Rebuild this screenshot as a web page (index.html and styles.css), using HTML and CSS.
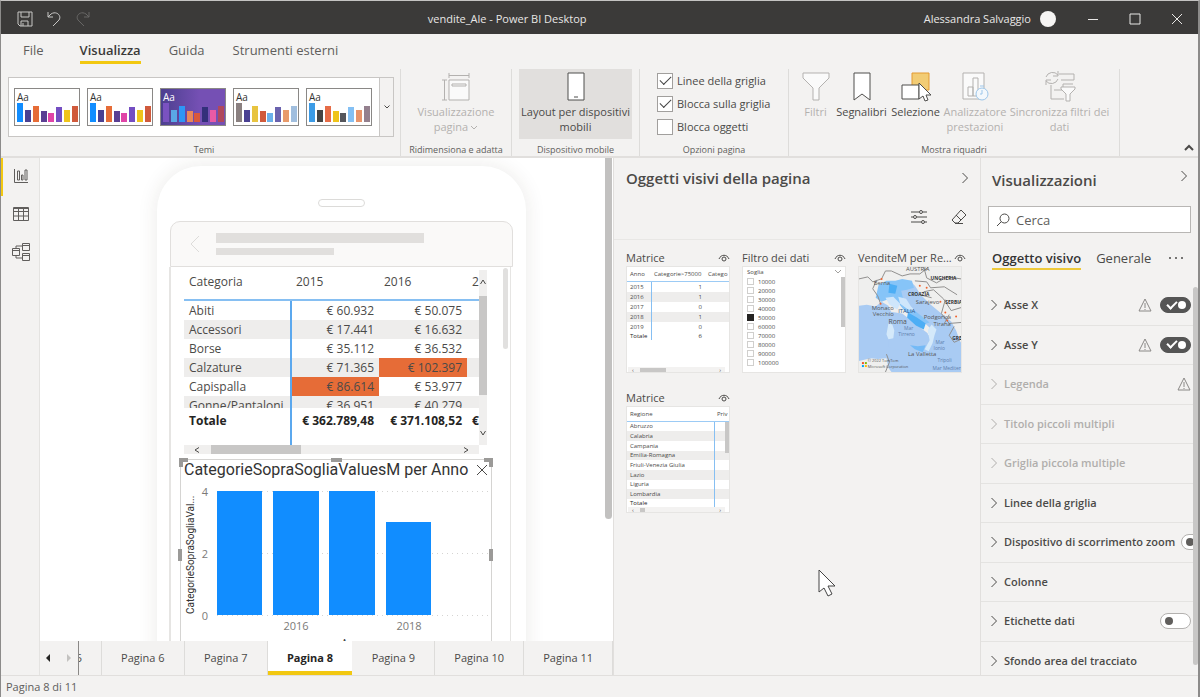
FILE: index.html
```html
<!DOCTYPE html>
<html lang="it">

<head>
    <meta charset="UTF-8">
    <meta name="viewport" content="width=device-width, initial-scale=1.0">
    <link rel="stylesheet" href="styles.css">
    <title>vendite_Ale - Power BI Desktop</title>
</head>

<body>
    <header class="titlebar">
        <div class="quick">
            <button aria-label="Salva"><svg width="16" height="16" viewBox="0 0 16 16"><path d="M1 1h14v14H3l-2-2zM4 1v5h8V1M4 15v-5h7v5M6 12v3" /></svg></button>
            <button aria-label="Annulla"><svg width="16" height="16" viewBox="0 0 16 16"><path d="M2 1v5h5M2 6l3-3c6-4 12 3 7 7l-5 5" /></svg></button>
            <button aria-label="Ripeti" disabled><svg width="16" height="16" viewBox="0 0 16 16"><path d="M14 1v5H9M14 6l-3-3C5-1-1 6 4 10l5 5" /></svg></button>
        </div>
        <h1>vendite_Ale - Power BI Desktop</h1>
        <div class="account">
            <span>Alessandra Salvaggio</span>
            <span class="avatar"></span>
            <button aria-label="Riduci a icona"><svg width="12" height="12" viewBox="0 0 12 12"><path d="M1 6.500h10" /></svg></button>
            <button aria-label="Ingrandisci"><svg width="12" height="12" viewBox="0 0 12 12"><path d="M1 1h10v10H1z" /></svg></button>
            <button aria-label="Chiudi"><svg width="12" height="12" viewBox="0 0 12 12"><path d="M1 1l10 10M11 1L1 11" /></svg></button>
        </div>
    </header>

    <nav class="menu">
        <a href="#">File</a>
        <a href="#" class="active">Visualizza</a>
        <a href="#">Guida</a>
        <a href="#">Strumenti esterni</a>
    </nav>

    <section class="ribbon">
        <div class="group group-themes">
            <div class="gallery">
                <button class="theme" aria-label="Tema 1"><span>Aa</span>
                    <svg width="64" height="36" viewBox="0 0 64 36"><path fill="#118dff" d="M2 14h6v19H2z" /><path fill="#4a4092" d="M10 21h6v12h-6z" /><path fill="#e66c37" d="M18 17h6v16h-6z" /><path fill="#5b3f93" d="M26 22h6v11h-6z" /><path fill="#e044a7" d="M33 24h6v9h-6z" /><path fill="#744ec2" d="M41 18h6v15h-6z" /><path fill="#efc41b" d="M49 21h6v12h-6z" /><path fill="#d05a3c" d="M57 17h6v16h-6z" /></svg>
                </button>
                <button class="theme" aria-label="Tema 2"><span>Aa</span>
                    <svg width="64" height="36" viewBox="0 0 64 36"><path fill="#118dff" d="M2 14h6v19H2z" /><path fill="#4a4092" d="M10 21h6v12h-6z" /><path fill="#e66c37" d="M18 17h6v16h-6z" /><path fill="#5b3f93" d="M26 22h6v11h-6z" /><path fill="#e044a7" d="M33 24h6v9h-6z" /><path fill="#744ec2" d="M41 18h6v15h-6z" /><path fill="#efc41b" d="M49 21h6v12h-6z" /><path fill="#d05a3c" d="M57 17h6v16h-6z" /></svg>
                </button>
                <button class="theme theme-dark" aria-label="Tema 3"><span>Aa</span>
                    <svg width="64" height="36" viewBox="0 0 64 36"><path fill="#7a52c0" d="M2 14h6v19H2z" /><path fill="#5aa9e6" d="M10 21h6v12h-6z" /><path fill="#2e96f5" d="M18 17h6v16h-6z" /><path fill="#e8875a" d="M26 22h6v11h-6z" /><path fill="#d9583c" d="M33 24h6v9h-6z" /><path fill="#33307a" d="M41 18h6v15h-6z" /><path fill="#e85aa5" d="M49 21h6v12h-6z" /><path fill="#b0485c" d="M57 17h6v16h-6z" /></svg>
                </button>
                <button class="theme" aria-label="Tema 4"><span>Aa</span>
                    <svg width="64" height="36" viewBox="0 0 64 36"><path fill="#8a8080" d="M2 14h6v19H2z" /><path fill="#4a4092" d="M10 21h6v12h-6z" /><path fill="#e8c440" d="M18 17h6v16h-6z" /><path fill="#d05a3c" d="M26 22h6v11h-6z" /><path fill="#6ab0ea" d="M33 24h6v9h-6z" /><path fill="#6a62ae" d="M41 18h6v15h-6z" /><path fill="#e89a6a" d="M49 21h6v12h-6z" /><path fill="#a0bede" d="M57 17h6v16h-6z" /></svg>
                </button>
                <button class="theme" aria-label="Tema 5"><span>Aa</span>
                    <svg width="64" height="36" viewBox="0 0 64 36"><path fill="#3c9be6" d="M2 14h6v19H2z" /><path fill="#444" d="M10 21h6v12h-6z" /><path fill="#e66c47" d="M18 17h6v16h-6z" /><path fill="#efc41b" d="M26 22h6v11h-6z" /><path fill="#55565c" d="M33 24h6v9h-6z" /><path fill="#84c0f4" d="M41 18h6v15h-6z" /><path fill="#e8946a" d="M49 21h6v12h-6z" /><path fill="#94808e" d="M57 17h6v16h-6z" /></svg>
                </button>
                <button class="gallery-more" aria-label="Altri temi"><svg width="8" height="6" viewBox="0 0 8 6"><path d="M1.500 1.500L4 4l2.500-2.500" /></svg></button>
            </div>
            <p>Temi</p>
        </div>
        <div class="group group-view">
            <div class="tools">
                <button class="tool" disabled>
                    <svg width="32" height="32" viewBox="0 0 32 32"><path d="M9 2v5M29 2v5M9 4.500h20M2 9h5M2 29h5M4.500 9v20" /><path fill="#fafafa" d="M9 9h20v20H9z" /><path d="M12 13h14v2H12z" /></svg>
                    <span>Visualizzazione pagina<svg class="caret" width="8" height="6" viewBox="0 0 8 6"><path d="M1 1l3 3 3-3" /></svg></span>
                </button>
            </div>
            <p>Ridimensiona e adatta</p>
        </div>
        <div class="group group-mobile">
            <div class="tools">
                <button class="tool selected">
                    <svg width="32" height="32" viewBox="0 0 32 32"><path fill="#fff" d="M8 2h16v27H8z" /><path d="M14 26h4" /></svg>
                    <span>Layout per dispositivi mobili</span>
                </button>
            </div>
            <p>Dispositivo mobile</p>
        </div>
        <div class="group group-options">
            <div class="checks">
                <label><input type="checkbox" checked>Linee della griglia</label>
                <label><input type="checkbox" checked>Blocca sulla griglia</label>
                <label><input type="checkbox">Blocca oggetti</label>
            </div>
            <p>Opzioni pagina</p>
        </div>
        <div class="group group-panes">
            <div class="tools">
                <button class="tool filters" disabled>
                    <svg width="32" height="32" viewBox="0 0 32 32"><path fill="#fafafa" d="M3 2h26v5L19 17v12h-6V17L3 7z" /></svg>
                    <span>Filtri</span>
                </button>
                <button class="tool bookmarks">
                    <svg width="32" height="32" viewBox="0 0 32 32"><path fill="#fff" d="M8 2h16v27l-8-6-8 6z" /></svg>
                    <span>Segnalibri</span>
                </button>
                <button class="tool selection">
                    <svg width="32" height="32" viewBox="0 0 32 32"><path fill="#f2cc74" stroke="#e39a30" d="M12 2h17v17H12z" /><path fill="#fff" d="M2 14h17v14H2z" /><path fill="#fff" d="M19 12v16l4-3 2 5 3-1-2-5h5z" /></svg>
                    <span>Selezione</span>
                </button>
                <button class="tool analyzer" disabled>
                    <svg width="32" height="32" viewBox="0 0 32 32"><path fill="#fafafa" d="M4 2h21v26H4z" /><path d="M9 16h5v9H9zM14 7h5v18h-5z" /><g stroke="#9cc6ea"><circle cx="23" cy="23" r="6" fill="#f3f8fc" /><path d="M23 19v4h-2M21 15h4" /></g></svg>
                    <span>Analizzatore prestazioni</span>
                </button>
                <button class="tool sync" disabled>
                    <svg width="32" height="32" viewBox="0 0 32 32"><path d="M15 3h15v6H17M7 14v14h13M10 19h9v-6h10" /><path fill="#fafafa" d="M17 16h14v2l-5 5v7h-4v-7l-5-5z" /><path d="M2 6a7 7 0 0 1 12-2M14 0v5h-5M14 8a7 7 0 0 1-12 2M2 14V9h5" /></svg>
                    <span>Sincronizza filtri dei dati</span>
                </button>
            </div>
            <p>Mostra riquadri</p>
        </div>
        <button class="collapse" aria-label="Comprimi barra"><svg width="10" height="7" viewBox="0 0 10 7"><path d="M1 6l4-4 4 4" /></svg></button>
    </section>

    <main class="workspace">
        <nav class="views">
            <a href="#" class="active" aria-label="Report"><svg width="16" height="16" viewBox="0 0 16 16"><path d="M1.500 1v13.500H15M4.500 3h2v9h-2zM8.500 7h1.500v5h-1.500zM12 2h2v10h-2z" /></svg></a>
            <a href="#" aria-label="Dati"><svg width="16" height="16" viewBox="0 0 16 16"><path d="M.5 1.500h15v13H.5zM.5 5.500h15M.5 10h15M5.500 1.500v13M10.500 1.500v13" /><path d="M.5 2.500h15" /></svg></a>
            <a href="#" aria-label="Modello"><svg width="20" height="20" viewBox="0 0 20 20"><path d="M1.500 6.500h7v7h-7zM1.500 8.500h7M11.500 1.500h7v7h-7zM11.500 3.500h7M11.500 11.500h7v7h-7zM11.500 13.500h7M5 6.500V4h6.500M5 13.500V16h6.500" /></svg></a>
        </nav>

        <section class="editor">
            <div class="canvas">
                <div class="phone">
                    <div class="speaker"></div>
                    <div class="phone-head">
                        <svg width="10" height="18" viewBox="0 0 10 18"><path d="M9 1L1 9l8 8" /></svg>
                        <div class="placeholder"><i></i><i></i></div>
                    </div>
                    <div class="screen">
                        <div class="matrix">
                            <div class="matrix-view">
                                <table>
                                    <thead>
                                        <tr><th>Categoria</th><th>2015</th><th>2016</th><th>2</th></tr>
                                    </thead>
                                    <tbody>
                                        <tr><td>Abiti</td><td>€ 60.932</td><td>€ 50.075</td><td></td></tr>
                                        <tr><td>Accessori</td><td>€ 17.441</td><td>€ 16.632</td><td></td></tr>
                                        <tr><td>Borse</td><td>€ 35.112</td><td>€ 36.532</td><td></td></tr>
                                        <tr><td>Calzature</td><td>€ 71.365</td><td class="over">€ 102.397</td><td></td></tr>
                                        <tr><td>Capispalla</td><td class="over">€ 86.614</td><td>€ 53.977</td><td></td></tr>
                                        <tr class="cut"><td><div>Gonne/Pantaloni</div></td><td><div>€ 36.951</div></td><td><div>€ 40.279</div></td><td></td></tr>
                                    </tbody>
                                    <tfoot>
                                        <tr><td>Totale</td><td>€ 362.789,48</td><td>€ 371.108,52</td><td>€</td></tr>
                                    </tfoot>
                                </table>
                                <div class="vscroll">
                                    <svg width="8" height="6" viewBox="0 0 8 6"><path d="M1.500 5L4 1l2.500 4" /></svg>
                                    <i></i>
                                    <svg width="8" height="6" viewBox="0 0 8 6"><path d="M1.500 1L4 5l2.500-4" /></svg>
                                </div>
                            </div>
                            <div class="hscroll">
                                <svg width="6" height="8" viewBox="0 0 6 8"><path d="M5 1.500L1 4l4 2.500" /></svg>
                                <i></i>
                                <svg width="6" height="8" viewBox="0 0 6 8"><path d="M1 1.500L5 4 1 6.500" /></svg>
                            </div>
                        </div>
                        <div class="chart">
                            <div class="chart-title">
                                <h2>CategorieSopraSogliaValuesM per Anno</h2>
                                <button aria-label="Rimuovi"><svg width="12" height="12" viewBox="0 0 12 12"><path d="M1 1l10 10M11 1L1 11" /></svg></button>
                            </div>
                            <svg class="plot" width="310" height="170" viewBox="0 0 310 170">
                                <path class="gridline" d="M36 11.500h272M36 73.500h272M36 135.500h272" />
                                <path class="bar" d="M36 11h45v124H36zM92 11h46v124H92zM148 11h46v124h-46zM205 42h45v93h-45z" />
                                <text class="axis" x="27" y="16" text-anchor="end">4</text>
                                <text class="axis" x="27" y="78" text-anchor="end">2</text>
                                <text class="axis" x="27" y="140" text-anchor="end">0</text>
                                <text class="axis" x="115" y="150" text-anchor="middle">2016</text>
                                <text class="axis" x="228" y="150" text-anchor="middle">2018</text>
                                <text class="axis-name" x="172" y="167" text-anchor="middle">Anno</text>
                                <text class="axis-name" transform="translate(13 134) rotate(-90)">CategorieSopraSogliaVal...</text>
                            </svg>
                            <i class="handle top-left"></i>
                            <i class="handle top"></i>
                            <i class="handle top-right"></i>
                            <i class="handle left"></i>
                            <i class="handle right"></i>
                        </div>
                        <div class="screen-scroll"></div>
                    </div>
                </div>
                <div class="canvas-scroll"></div>
            </div>
            <nav class="pages">
                <div class="pager">
                    <button aria-label="Pagina precedente"><svg width="6" height="8" viewBox="0 0 6 8"><path d="M5 0v8L1 4z" /></svg></button>
                    <button aria-label="Pagina successiva" disabled><svg width="6" height="8" viewBox="0 0 6 8"><path d="M1 0v8l4-4z" /></svg></button>
                </div>
                <a href="#" class="partial"><span>5</span></a>
                <a href="#">Pagina 6</a>
                <a href="#">Pagina 7</a>
                <a href="#" class="active">Pagina 8</a>
                <a href="#">Pagina 9</a>
                <a href="#" class="wide">Pagina 10</a>
                <a href="#" class="wide">Pagina 11</a>
            </nav>
        </section>

        <aside class="visuals">
            <div class="visuals-head">
                <h2>Oggetti visivi della pagina</h2>
                <button aria-label="Comprimi"><svg width="8" height="12" viewBox="0 0 8 12"><path d="M1.500 1l5 5-5 5" /></svg></button>
            </div>
            <div class="visuals-tools">
                <button aria-label="Opzioni"><svg width="16" height="14" viewBox="0 0 16 14"><path d="M0 2h8M12 2h4M0 7h2M6 7h10M0 12h10M14 12h2" /><circle cx="10" cy="2" r="1.500" /><circle cx="4" cy="7" r="1.500" /><circle cx="12" cy="12" r="1.500" /></svg></button>
                <button aria-label="Cancella"><svg width="16" height="16" viewBox="0 0 16 16"><path d="M10 1l5 5-8 8H4l-3-3zM5 6l5 5M4 14.500h8" /></svg></button>
            </div>
            <div class="cards">
                <article>
                    <h3><span>Matrice</span><svg width="12" height="8" viewBox="0 0 12 8"><path d="M1 5c2-5 8-5 10 0" /><circle cx="6" cy="5" r="2" /></svg></h3>
                    <div class="card mini-years">
                        <table>
                            <thead><tr><th>Anno</th><th>Categorie&gt;75000</th><th>Catego</th></tr></thead>
                            <tbody>
                                <tr><td>2015</td><td>1</td><td></td></tr>
                                <tr><td>2016</td><td>1</td><td></td></tr>
                                <tr><td>2017</td><td>0</td><td></td></tr>
                                <tr><td>2018</td><td>1</td><td></td></tr>
                                <tr><td>2019</td><td>0</td><td></td></tr>
                            </tbody>
                            <tfoot><tr><td>Totale</td><td>6</td><td></td></tr></tfoot>
                        </table>
                        <div class="mini-scroll"><span>‹</span><i></i><span>›</span></div>
                    </div>
                </article>
                <article>
                    <h3><span>Filtro dei dati</span><svg width="12" height="8" viewBox="0 0 12 8"><path d="M1 5c2-5 8-5 10 0" /><circle cx="6" cy="5" r="2" /></svg></h3>
                    <div class="card slicer">
                        <div class="slicer-head">Soglia<svg width="8" height="6" viewBox="0 0 8 6"><path d="M1 1l3 3 3-3" /></svg></div>
                        <label><input type="checkbox">10000</label>
                        <label><input type="checkbox">20000</label>
                        <label><input type="checkbox">30000</label>
                        <label><input type="checkbox">40000</label>
                        <label><input type="checkbox" checked>50000</label>
                        <label><input type="checkbox">60000</label>
                        <label><input type="checkbox">70000</label>
                        <label><input type="checkbox">80000</label>
                        <label><input type="checkbox">90000</label>
                        <label><input type="checkbox">100000</label>
                        <i class="slicer-scroll"></i>
                    </div>
                </article>
                <article>
                    <h3><span>VenditeM per Re...</span><svg width="12" height="8" viewBox="0 0 12 8"><path d="M1 5c2-5 8-5 10 0" /><circle cx="6" cy="5" r="2" /></svg></h3>
                    <div class="card">
                        <svg class="map" viewBox="0 0 104 106" preserveAspectRatio="none">
                            <path fill="#efefee" d="M0 0h104v106H0z" />
                            <path fill="#a9cbf3" d="M0 39l8-1 9 2 6-5 7 4 4 9 8 9 10 6 9 7 2 7-3 8h6l4-8-1-8 7-1-3-6-10-9-10-8-7-9-7-9-2-9 6-4 9 0 5 5 6 9 9 9 12 10 10 8 5 9 4 11 4 5v31H37l-7-9-2-10-9 1-7-1-12 3z" />
                            <path fill="#a9cbf3" d="M30 45l14 2 26 20 4 16-14 6-30-8z" />
                            <path fill="#d4e9fa" d="M30 57l4 1 2 6-1 8-5 1-2-5zM74 58l5 5-2 6-2 8-4 8-4-2 5-9-2-10z" />
                            <path fill="#86c4f8" d="M20 18l8-4 9 0 7-2 10 2 2 7-7 2-6 1 2 8 8 9 10 8 9 7-7 2-9-7-9-6-7-9-9-4-8 3-6-4z" />
                            <path fill="#4daef5" d="M31 17l8 2-2 8-7-1zM50 46l9 5 9 6-2 6-8-4-9-8z" />
                            <path fill="#74baf6" d="M52 79l8 1 8-1-3 7-8-3z" />
                            <path fill="#cfe6fb" d="M40 30l8 2 5 8 4 4-7-1-8-6zM27 31l8-1 7 7-3 6-8-5z" />
                            <path class="border-line" d="M0 12l9-2 5 5 9-3 4-8 6 0 11 5 8-2 10 0 9-7M66 0l3 11 10 5 11-6 14 2M57 14l12 1 4 6 14-1 13 8M66 25l10-2 10 9 8 12 10-3M74 31l-12-3M88 33l-4 14 8 10 12-1M92 48l-5 9M97 60l-5 9 5 7 7-3M18 13l-4 9 5 7 3 8M28 88l3 8-4 10" />
                            <g fill="#f0642f"><circle cx="23" cy="12" r="1" /><circle cx="22" cy="37" r="1" /><circle cx="62" cy="19" r="1" /><circle cx="69" cy="21" r="1" /><circle cx="83" cy="35" r="1" /><circle cx="88" cy="46" r="1" /><circle cx="99" cy="50" r="1" /><circle cx="90" cy="54" r="1" /></g>
                            <g class="country"><text x="73" y="13">UNGHERIA</text><text x="50" y="29">CROAZIA</text><text x="88" y="37">SERBIA</text><text x="95" y="74">GRE</text></g>
                            <text x="48" y="4">AUSTRIA</text>
                            <text x="15" y="18">Berna</text>
                            <text x="58" y="37">Sarajevo</text>
                            <text x="13" y="43">Monaco</text>
                            <text x="14" y="49">Vecchio</text>
                            <text class="italy" x="40" y="46">ITALIA</text>
                            <text x="66" y="53">Podgorica</text>
                            <text x="76" y="60">Tirana</text>
                            <text class="city" x="30" y="58">Roma</text>
                            <g class="sea"><text x="46" y="64">Mar</text><text x="40" y="70">Tirreno</text><text x="78" y="78">Mar</text><text x="76" y="84">Ionio</text><text x="80" y="96">Tripoli</text><text x="75" y="104">Mar Mediterr.</text></g>
                            <text x="50" y="90">La Valletta</text>
                            <text class="copy" x="9" y="96">© 2022 TomTom</text><text class="copy" x="9" y="102">Microsoft Corporation</text>
                            <path fill="#f25022" d="M3 96h2v2H3z" /><path fill="#7fba00" d="M6 96h2v2H6z" /><path fill="#00a4ef" d="M3 99h2v2H3z" /><path fill="#ffb900" d="M6 99h2v2H6z" />
                        </svg>
                    </div>
                </article>
                <article>
                    <h3><span>Matrice</span><svg width="12" height="8" viewBox="0 0 12 8"><path d="M1 5c2-5 8-5 10 0" /><circle cx="6" cy="5" r="2" /></svg></h3>
                    <div class="card mini-regions">
                        <table>
                            <thead><tr><th>Regione</th><th>Priv</th></tr></thead>
                            <tbody>
                                <tr><td>Abruzzo</td><td></td></tr>
                                <tr><td>Calabria</td><td></td></tr>
                                <tr><td>Campania</td><td></td></tr>
                                <tr><td>Emilia-Romagna</td><td></td></tr>
                                <tr><td>Friuli-Venezia Giulia</td><td></td></tr>
                                <tr><td>Lazio</td><td></td></tr>
                                <tr><td>Liguria</td><td></td></tr>
                                <tr><td>Lombardia</td><td></td></tr>
                            </tbody>
                            <tfoot><tr><td>Totale</td><td></td></tr></tfoot>
                        </table>
                        <div class="mini-scroll short"><span>‹</span><i></i><span>›</span></div>
                        <i class="region-scroll"></i>
                    </div>
                </article>
            </div>
        </aside>

        <aside class="format">
            <div class="format-head">
                <h2>Visualizzazioni</h2>
                <button aria-label="Comprimi"><svg width="8" height="12" viewBox="0 0 8 12"><path d="M1.500 1l5 5-5 5" /></svg></button>
            </div>
            <label class="search">
                <svg width="14" height="14" viewBox="0 0 14 14"><circle cx="8.500" cy="5.500" r="4.500" /><path d="M5.300 8.700L1 13" /></svg>
                <input type="text" placeholder="Cerca" aria-label="Cerca">
            </label>
            <nav class="format-tabs">
                <a href="#" class="active">Oggetto visivo</a>
                <a href="#">Generale</a>
                <button aria-label="Altro"><svg width="16" height="4" viewBox="0 0 16 4"><circle cx="2" cy="2" r="1" /><circle cx="8" cy="2" r="1" /><circle cx="14" cy="2" r="1" /></svg></button>
            </nav>
            <div class="options">
                <div class="options-list">
                    <div class="option"><svg class="chevron" width="8" height="12" viewBox="0 0 8 12"><path d="M1.500 1l5 5-5 5" /></svg><label for="asse-x">Asse X</label><svg class="warn" width="14" height="14" viewBox="0 0 14 14"><path d="M7 1l6 12H1zM7 5v5M7 11v1" /></svg><input type="checkbox" class="toggle" id="asse-x" checked></div>
                    <div class="option"><svg class="chevron" width="8" height="12" viewBox="0 0 8 12"><path d="M1.500 1l5 5-5 5" /></svg><label for="asse-y">Asse Y</label><svg class="warn" width="14" height="14" viewBox="0 0 14 14"><path d="M7 1l6 12H1zM7 5v5M7 11v1" /></svg><input type="checkbox" class="toggle" id="asse-y" checked></div>
                    <div class="option off"><svg class="chevron" width="8" height="12" viewBox="0 0 8 12"><path d="M1.500 1l5 5-5 5" /></svg><span>Legenda</span><svg class="warn" width="14" height="14" viewBox="0 0 14 14"><path d="M7 1l6 12H1zM7 5v5M7 11v1" /></svg></div>
                    <div class="option off"><svg class="chevron" width="8" height="12" viewBox="0 0 8 12"><path d="M1.500 1l5 5-5 5" /></svg><span>Titolo piccoli multipli</span></div>
                    <div class="option off"><svg class="chevron" width="8" height="12" viewBox="0 0 8 12"><path d="M1.500 1l5 5-5 5" /></svg><span>Griglia piccola multiple</span></div>
                    <div class="option"><svg class="chevron" width="8" height="12" viewBox="0 0 8 12"><path d="M1.500 1l5 5-5 5" /></svg><span>Linee della griglia</span></div>
                    <div class="option"><svg class="chevron" width="8" height="12" viewBox="0 0 8 12"><path d="M1.500 1l5 5-5 5" /></svg><label for="zoom">Dispositivo di scorrimento zoom</label><input type="checkbox" class="toggle" id="zoom"></div>
                    <div class="option"><svg class="chevron" width="8" height="12" viewBox="0 0 8 12"><path d="M1.500 1l5 5-5 5" /></svg><span>Colonne</span></div>
                    <div class="option"><svg class="chevron" width="8" height="12" viewBox="0 0 8 12"><path d="M1.500 1l5 5-5 5" /></svg><label for="etichette">Etichette dati</label><input type="checkbox" class="toggle" id="etichette"></div>
                    <div class="option"><svg class="chevron" width="8" height="12" viewBox="0 0 8 12"><path d="M1.500 1l5 5-5 5" /></svg><span>Sfondo area del tracciato</span></div>
                </div>
                <div class="options-scroll"></div>
            </div>
        </aside>
    </main>

    <footer class="status">Pagina 8 di 11</footer>

    <svg class="pointer" width="18" height="28" viewBox="0 0 18 28"><path d="M1 1v22l5-4 4 8 4-2-4-8h7z" /></svg>
</body>

</html>
```

FILE: styles.css
```css
* {
    box-sizing: border-box;
}

body {
    font-family: "Open Sans", "Noto Sans", sans-serif;
    font-size: 11px;
    line-height: 16px;
    color: #4b4a48;
    background-color: #f3f2f1;
    margin: 0;
    height: 100vh;
    display: flex;
    flex-direction: column;
    overflow: hidden;
    border: 1px solid #8c8b8a;
    border-top-color: #c4c3c2;
    border-right-width: 2px;
    border-bottom: none;
}

h1,
h2,
h3,
p {
    margin: 0;
    font-weight: 400;
}

a {
    color: inherit;
    text-decoration: none;
}

button {
    font: inherit;
    color: inherit;
    background: none;
    border: none;
    padding: 0;
    display: flex;
    align-items: center;
    justify-content: center;
}

svg {
    display: block;
    flex-shrink: 0;
    fill: none;
    stroke: currentColor;
}

table {
    border-collapse: collapse;
    table-layout: fixed;
}

th,
td {
    padding: 0;
    font-weight: 400;
    text-align: left;
    white-space: nowrap;
}

/* barra del titolo */
.titlebar {
    display: grid;
    grid-template-columns: 15fr auto 22fr;
    align-items: center;
    flex-shrink: 0;
    height: 33px;
    padding: 3px 9px 0 16px;
    color: #e8e7e6;
    background-color: #3b3a39;
    line-height: 28px;
}

.titlebar h1 {
    font-size: 11px;
}

.quick,
.account {
    display: flex;
    align-items: center;
}

.quick {
    gap: 13px;
}

.quick button {
    color: #c8c7c6;
}

.quick button:disabled {
    color: #686766;
}

.account {
    justify-content: flex-end;
}

.avatar {
    width: 16px;
    height: 16px;
    margin: 0 21px 0 9px;
    border-radius: 50%;
    background-color: #f6f5f4;
}

.account button {
    width: 24px;
    height: 24px;
    margin-left: 18px;
}

.avatar + button {
    margin-left: 4px;
}

/* menu */
.menu {
    display: flex;
    flex-shrink: 0;
    gap: 28px;
    height: 35px;
    padding: 6px 22px 0;
    font-size: 13px;
    line-height: 20px;
    color: #5f5e5c;
}

.menu a {
    height: 24px;
}

.menu a:first-child {
    margin-right: 8px;
}

.menu .active {
    font-weight: 600;
    color: #3b3a39;
    border-bottom: 3px solid #f2c811;
}

/* barra multifunzione */
.ribbon {
    display: flex;
    flex-shrink: 0;
    height: 89px;
    border-bottom: 2px solid #e1dfdd;
}

.group {
    display: flex;
    flex-direction: column;
    justify-content: space-between;
    border-right: 1px solid #dddcda;
}

.group p {
    font-size: 9px;
    line-height: 12px;
    text-align: center;
    color: #5f5e5c;
}

.group-themes {
    width: 400px;
    padding-left: 7px;
}

.group-view {
    width: 111px;
}

.group-mobile {
    width: 128px;
}

.group-options {
    width: 149px;
}

.group-panes {
    width: 331px;
}

.gallery {
    display: flex;
    align-items: center;
    gap: 7px;
    width: 386px;
    height: 60px;
    margin-top: 8px;
    padding-left: 5px;
    border: 1px solid #c8c6c4;
    background-color: #fff;
}

.theme {
    position: relative;
    width: 66px;
    height: 38px;
    border: 1px solid #8a8886;
    background-color: #fff;
}

.theme span {
    position: absolute;
    top: 1px;
    left: 2px;
    font-size: 10px;
    line-height: 14px;
    color: #333;
}

.theme svg {
    stroke: none;
}

.theme-dark {
    background: linear-gradient(90deg, #4c3f8f, #7550b4 60%);
}

.theme-dark span {
    color: #fff;
}

.gallery-more {
    align-self: stretch;
    width: 16px;
    margin-left: auto;
    border-left: 1px solid #c8c6c4;
    background-color: #f3f2f1;
}

.tools {
    display: flex;
    justify-content: center;
    align-items: flex-start;
}

.tool {
    flex-direction: column;
    justify-content: flex-start;
    width: 96px;
    height: 70px;
    padding-top: 2px;
    line-height: 15px;
}

.tool > span {
    margin-top: 1px;
}

.tool svg {
    color: #4f4e4c;
}

.tool:disabled,
.tool:disabled svg {
    color: #b3b1af;
}

.tool .caret {
    display: inline-block;
    margin-left: 2px;
}

.tool.selected {
    width: 113px;
    background-color: #e1dfdd;
}

.group-panes .tool {
    width: auto;
}

.group-panes .filters {
    width: 38px;
}

.group-panes .bookmarks {
    width: 54px;
}

.group-panes .selection {
    width: 54px;
}

.group-panes .analyzer {
    width: 65px;
}

.group-panes .sync {
    width: 104px;
}

.checks {
    padding-left: 17px;
}

.checks label {
    display: flex;
    align-items: center;
    gap: 4px;
    height: 23px;
}

.checks input {
    appearance: none;
    display: grid;
    place-items: center;
    width: 16px;
    height: 16px;
    margin: 0;
    border: 1px solid #a19f9d;
    background-color: #fff;
}

.checks input:checked::before {
    content: "";
    width: 10px;
    height: 5px;
    margin-bottom: 3px;
    border-left: 1px solid #444;
    border-bottom: 1px solid #444;
    transform: rotate(-45deg);
}

.collapse {
    align-self: flex-end;
    margin: 0 4px 5px auto;
    stroke-width: 2;
}

/* area di lavoro */
.workspace {
    display: flex;
    flex: 1;
    min-height: 0;
}

.views {
    display: flex;
    flex-direction: column;
    width: 39px;
    border-right: 1px solid #e4e3e1;
    color: #605e5c;
}

.views a {
    display: grid;
    place-items: center;
    height: 38px;
    padding-bottom: 3px;
    border-left: 2px solid transparent;
}

.views .active {
    border-left-color: #f2c811;
}

.editor {
    display: flex;
    flex-direction: column;
    flex: 1;
    min-width: 0;
}

.canvas {
    position: relative;
    flex: 1;
    min-height: 0;
    overflow: hidden;
    padding: 8px 0 0 117px;
    background-color: #fff;
}

.canvas-scroll {
    position: absolute;
    top: 0;
    right: 1px;
    width: 7px;
    height: 361px;
    border-radius: 0 0 4px 4px;
    background-color: #c2c1c0;
}

.phone {
    width: 369px;
    height: 560px;
    padding-top: 33px;
    border-radius: 44px;
    background-color: #fff;
    box-shadow: 0 0 20px rgba(60, 50, 30, 0.1);
}

.speaker {
    width: 47px;
    height: 8px;
    margin: 0 auto;
    border: 1px solid #dcdbd9;
    border-radius: 4px;
}

.phone-head {
    display: flex;
    align-items: center;
    gap: 16px;
    height: 46px;
    margin: 14px 13px 0 13px;
    padding-left: 19px;
    border: 1px solid #e1dfdd;
    border-radius: 10px 10px 0 0;
    background-color: #faf9f8;
    color: #dddcda;
}

.placeholder i {
    display: block;
    width: 208px;
    height: 10px;
    background-color: #e1dfdd;
}

.placeholder i + i {
    width: 118px;
    height: 7px;
    margin-top: 5px;
}

.screen {
    position: relative;
    height: 460px;
    margin: 0 15px 0 12px;
    padding: 3px 19px 0 13px;
    border: 1px solid #e6e5e3;
    border-width: 0 1px 0 2px;
}

.screen-scroll {
    position: absolute;
    top: 1px;
    right: 2px;
    width: 5px;
    height: 81px;
    border-radius: 3px;
    background-color: #e1e0df;
}

/* matrice */
.matrix-view {
    display: flex;
    width: 303px;
    height: 175px;
}

.matrix table {
    width: 295px;
    height: 175px;
    font-size: 12px;
    line-height: 19px;
    color: #4b4a48;
}

.matrix th {
    height: 30px;
    padding: 0 5px 6px;
    border-bottom: 2px solid #86bff2;
}

.matrix th:nth-child(1) {
    width: 107px;
}

.matrix th:nth-child(2),
.matrix th:nth-child(3) {
    width: 88px;
}

.matrix td {
    height: 19px;
    padding: 0 5px;
    text-align: right;
}

.matrix td:first-child {
    text-align: left;
    border-right: 2px solid #5ba8ee;
}

.matrix tbody tr:nth-child(even) {
    background-color: #eeedec;
}

.matrix .over {
    background-color: #e66c37;
}

.matrix .cut td,
.matrix .cut div {
    height: 12px;
    overflow: hidden;
}

.matrix tfoot td {
    height: 38px;
    padding-bottom: 14px;
    font-weight: 700;
    color: #252423;
}

.matrix th:last-child,
.matrix td:last-child {
    overflow: hidden;
}

.vscroll {
    display: flex;
    flex-direction: column;
    align-items: center;
    width: 8px;
    padding: 9px 0;
    background-color: #f0efee;
}

.vscroll i {
    width: 8px;
    height: 99px;
    margin: 11px 0 auto;
    background-color: #c8c7c6;
}

.hscroll {
    display: flex;
    align-items: center;
    width: 295px;
    height: 9px;
    padding: 0 10px;
    background-color: #f0efee;
}

.hscroll i {
    width: 90px;
    height: 9px;
    margin: 0 auto 0 11px;
    background-color: #c8c7c6;
}

/* istogramma */
.chart {
    position: relative;
    width: 312px;
    margin: 5px 0 0 -4px;
    border: 1px solid #d5d4d2;
    border-bottom: none;
}

.chart-title {
    display: flex;
    align-items: center;
    justify-content: space-between;
    height: 20px;
    padding: 0 3px;
}

.chart-title h2 {
    font-family: Roboto, sans-serif;
    font-size: 16px;
    line-height: 20px;
    color: #333;
    white-space: nowrap;
}

.plot {
    stroke: none;
    font-size: 11px;
}

.plot .gridline {
    stroke: #d5d4d2;
    stroke-dasharray: 1 4;
}

.plot .bar {
    fill: #118dff;
}

.plot .axis {
    fill: #7b7a78;
}

.plot .axis-name {
    font-family: Roboto, sans-serif;
    font-size: 10px;
    fill: #333;
}

.handle {
    position: absolute;
    border: 0 solid #9b9a98;
}

.handle.top-left {
    top: -2px;
    left: -2px;
    width: 9px;
    height: 9px;
    border-width: 4px 0 0 4px;
}

.handle.top {
    top: -2px;
    left: 150px;
    width: 11px;
    border-top-width: 4px;
}

.handle.top-right {
    top: -2px;
    right: -2px;
    width: 9px;
    height: 9px;
    border-width: 4px 4px 0 0;
}

.handle.left {
    top: 89px;
    left: -3px;
    height: 12px;
    border-left-width: 4px;
}

.handle.right {
    top: 89px;
    right: -2px;
    height: 12px;
    border-left-width: 4px;
}

/* schede delle pagine */
.pages {
    display: flex;
    height: 34px;
    line-height: 34px;
}

.pager {
    display: flex;
    align-items: center;
    gap: 15px;
    width: 39px;
    padding-left: 5px;
    border-right: 1px solid #8a8886;
}

.pager svg {
    fill: #252423;
    stroke: none;
}

.pager button:disabled svg {
    fill: #c3c2c0;
}

.pages a {
    width: 83px;
    text-align: center;
    border-right: 1px solid #dddcda;
}

.pages .partial {
    display: flex;
    width: 23px;
    overflow: hidden;
}

.pages .partial span {
    display: flex;
    justify-content: flex-end;
    width: 3px;
    overflow: hidden;
}

.pages .wide {
    width: 89px;
}

.pages .active {
    width: 85px;
    font-weight: 700;
    color: #252423;
    background-color: #fff;
    border-right: none;
    border-bottom: 4px solid #f2c811;
}

/* oggetti visivi */
.visuals {
    width: 367px;
    border-left: 1px solid #e1dfdd;
}

.visuals h2,
.format h2 {
    font-size: 15px;
    line-height: 20px;
    font-weight: 600;
}

.visuals-head {
    display: flex;
    justify-content: space-between;
    padding: 10px 11px 0 12px;
}

.visuals-tools {
    display: flex;
    justify-content: flex-end;
    gap: 24px;
    height: 52px;
    padding: 7px 13px 0 0;
    border-bottom: 1px solid #e8e7e5;
}

.cards {
    display: grid;
    grid-template-columns: repeat(3, 104px);
    gap: 16px 12px;
    padding: 9px 0 0 12px;
}

.cards article {
    min-width: 0;
}

.cards h3 {
    display: flex;
    align-items: center;
    gap: 2px;
    height: 17px;
    font-size: 11px;
    line-height: 16px;
    white-space: nowrap;
}

.cards h3 span {
    flex: 1;
}

.card {
    position: relative;
    height: 107px;
    overflow: hidden;
    border: 1px solid #e6e5e3;
    background-color: #fff;
    font-size: 6px;
    line-height: 8px;
}

.card table {
    width: 102px;
}

.card th {
    height: 14px;
    padding-left: 3px;
    border-bottom: 1px solid #9ccbf5;
}

.card td {
    padding: 0 3px;
}

.card tbody tr:nth-child(even) {
    background-color: #eeedec;
}

.card td:first-child {
    border-right: 1px solid #86bff2;
}

.card tfoot {
    font-weight: 700;
    color: #252423;
}

.mini-years table {
    height: 73px;
}

.mini-years th:nth-child(1) {
    width: 24px;
}

.mini-years th:nth-child(2) {
    width: 54px;
}

.mini-years td + td {
    text-align: right;
}

.mini-regions table {
    height: 100px;
}

.mini-regions th:nth-child(1) {
    width: 87px;
}

.mini-scroll {
    position: absolute;
    right: 4px;
    bottom: 0;
    left: 1px;
    display: flex;
    align-items: center;
    height: 5px;
    padding: 0 4px;
    background-color: #f3f2f1;
}

.mini-scroll i {
    width: 26px;
    height: 4px;
    margin: 0 auto 0 6px;
    background-color: #c8c7c6;
}

.mini-scroll.short i {
    width: 5px;
}

.region-scroll {
    position: absolute;
    top: 15px;
    right: 0;
    width: 4px;
    height: 31px;
    background-color: #c8c7c6;
}

.slicer-head {
    display: flex;
    align-items: center;
    justify-content: space-between;
    height: 10px;
    padding: 0 3px 0 4px;
}

.slicer-head svg {
    color: #a3a2a0;
}

.slicer label {
    display: flex;
    align-items: center;
    gap: 4px;
    height: 9px;
    padding-left: 4px;
}

.slicer input {
    appearance: none;
    width: 7px;
    height: 7px;
    margin: 0;
    border: 1px solid #d0cfcd;
}

.slicer input:checked {
    border-color: #252423;
    background-color: #252423;
}

.slicer-scroll {
    position: absolute;
    top: 10px;
    right: 0;
    width: 4px;
    height: 50px;
    background-color: #c8c7c6;
}

.map {
    width: 100%;
    height: 100%;
    stroke: none;
}

.map text {
    font-size: 6px;
    fill: #555;
}

.map .border-line {
    stroke: #8f8e8d;
}

.map .country text {
    font-size: 5px;
    font-weight: 700;
    fill: #333;
}

.map .city {
    font-size: 7px;
}

.map .italy {
    fill: #2f5687;
}

.map .sea text {
    font-size: 5px;
    fill: #5f7fae;
}

.map .copy {
    font-size: 4px;
}

/* riquadro visualizzazioni */
.format {
    display: flex;
    flex-direction: column;
    width: 218px;
    padding-top: 12px;
    border-left: 1px solid #e1dfdd;
}

.format-head {
    display: flex;
    justify-content: space-between;
    align-items: flex-start;
    padding: 0 10px 0 11px;
}

.search {
    display: flex;
    align-items: center;
    gap: 6px;
    height: 27px;
    margin: 16px 7px 0;
    padding: 0 7px;
    border: 1px solid #b8b6b4;
    background-color: #fff;
}

.search input {
    flex: 1;
    min-width: 0;
    padding: 0;
    border: none;
    outline: none;
    font: inherit;
    font-size: 13px;
}

.search input::placeholder {
    color: #605e5c;
}

.format-tabs {
    display: flex;
    align-items: flex-start;
    gap: 15px;
    padding: 15px 14px 0 11px;
    font-size: 13px;
    line-height: 20px;
    white-space: nowrap;
}

.format-tabs .active {
    font-weight: 600;
    color: #333;
    border-bottom: 2px solid #eec93a;
}

.format-tabs button {
    height: 20px;
    margin-left: auto;
}

.format-tabs svg {
    fill: currentColor;
    stroke: none;
}

.options {
    position: relative;
    flex: 1;
    min-height: 0;
    margin-top: 16px;
    overflow: hidden;
}

.options-list {
    display: grid;
    grid-template-columns: minmax(0, 1fr);
    grid-auto-rows: 1fr;
    height: 395px;
}

.option {
    display: flex;
    align-items: center;
    gap: 6px;
    padding: 0 7px 0 9px;
    border-bottom: 1px solid #e4e3e1;
    font-weight: 600;
    white-space: nowrap;
}

.option.off {
    color: #b0aeac;
}

.option .warn {
    margin-left: auto;
    color: #8a8886;
}

.toggle {
    appearance: none;
    display: flex;
    align-items: center;
    justify-content: flex-start;
    flex-shrink: 0;
    width: 31px;
    height: 16px;
    margin: 0 0 0 auto;
    padding: 0 4px;
    border: 1px solid #b3b1af;
    border-radius: 8px;
    background-color: #fff;
}

.toggle::after {
    content: "";
    width: 8px;
    height: 8px;
    border-radius: 50%;
    background-color: #605e5c;
}

.warn + .toggle {
    margin-left: 2px;
}

.toggle:checked {
    justify-content: space-between;
    border-color: #555;
    background-color: #555;
}

.toggle:checked::before {
    content: "";
    width: 8px;
    height: 4px;
    margin: 0 0 3px 2px;
    border-left: 2px solid #fff;
    border-bottom: 2px solid #fff;
    transform: rotate(-45deg);
}

.toggle:checked::after {
    background-color: #fff;
}

.options-scroll {
    position: absolute;
    top: 1px;
    right: 0;
    width: 5px;
    height: 378px;
    border-radius: 3px;
    background-color: #c8c7c6;
}

.status {
    flex-shrink: 0;
    height: 22px;
    padding-left: 5px;
    line-height: 22px;
    border-top: 1px solid #e1dfdd;
    color: #605e5c;
}

.pointer {
    position: absolute;
    top: 569px;
    left: 818px;
    fill: #fff;
    stroke: #444;
}
```
